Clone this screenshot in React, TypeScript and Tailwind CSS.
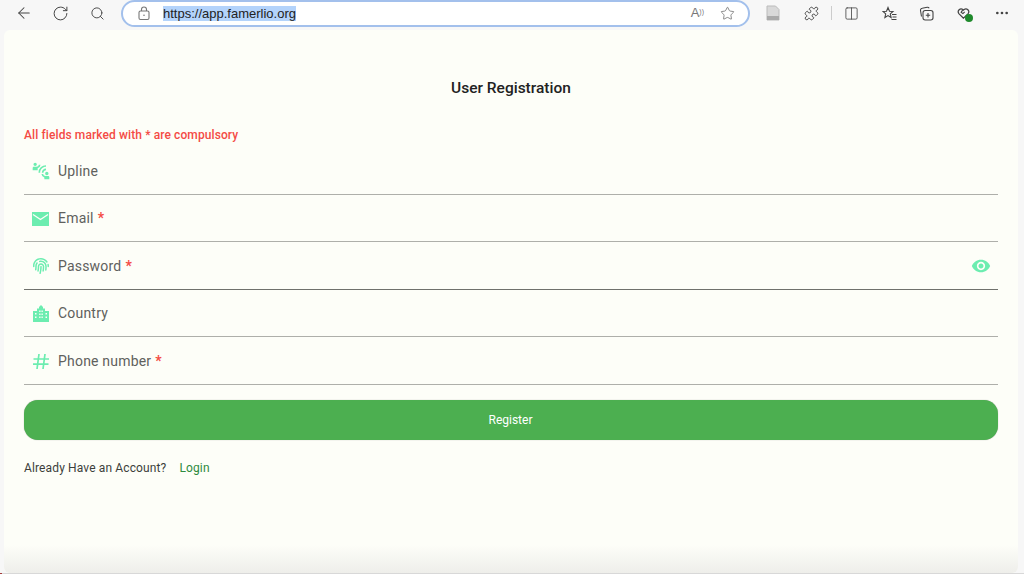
import React from "react";
import { ArrowLeft, RotateCw, Search, Star, Puzzle, Columns2, Ellipsis } from "lucide-react";
import { FaFingerprint } from "react-icons/fa";
import { MdConnectWithoutContact, MdVisibility } from "react-icons/md";

const Field = ({
  icon,
  label,
  required,
  dark,
  trailing,
}: {
  icon: React.ReactNode;
  label: string;
  required?: boolean;
  dark?: boolean;
  trailing?: React.ReactNode;
}) => (
  <div className={`flex h-[47.5px] items-center border-b pt-[2px] ${dark ? "border-[#6f716c]" : "border-[#aeafaa]"}`}>
    <div className="flex w-[34px] justify-center pr-[1px] text-[#6cedb0]">{icon}</div>
    <span className="text-[14px] tracking-[0.2px] text-[#5f615d]">{label}</span>
    {required && <span className="ml-[4px] text-[14px] font-bold text-[#f44b45]">*</span>}
    {trailing && <div className="ml-auto flex text-[#6cedb0]">{trailing}</div>}
  </div>
);

const MailIcon = () => (
  <svg width="17" height="14" viewBox="0 0 17 14">
    <rect width="17" height="14" fill="currentColor" />
    <path d="M1 2.500 8.500 7.500 16 2.500" fill="none" stroke="#fdfef8" strokeWidth="1.3" />
  </svg>
);

const CityIcon = () => (
  <svg width="16" height="17" viewBox="0 0 16 17">
    <path
      fill="currentColor"
      fillRule="evenodd"
      d="M0 6h4V3.500h2V2l2-2 2 2v1.500h2V6h4v11H0zM2 8v1.500h1.500V8zm0 3.500V13h1.500v-1.500zM6.200 5.500V7h1.300V5.500zm2.300 0V7h1.300V5.500zM6.200 8.500V10h1.300V8.500zm2.300 0V10h1.300V8.500zm-2.300 3V13h1.300v-1.500zm2.300 0V13h1.300v-1.500zM12.500 8v1.500H14V8zm0 3.500V13H14v-1.500z"
    />
  </svg>
);

const HashIcon = () => (
  <svg width="16" height="15" viewBox="0 0 16 15" fill="none" stroke="currentColor" strokeWidth="1.7">
    <path d="M6 0 4 15M12 0l-2 15M0.500 5H16M0 10.200h15.500" />
  </svg>
);

const Toolbar = () => (
  <div className="flex h-[30px] shrink-0 items-center pb-[4px] text-[#444]">
    <ArrowLeft size={18} strokeWidth={1.4} className="ml-[15px]" />
    <RotateCw size={17} strokeWidth={1.4} className="ml-[19px]" />
    <Search size={15} strokeWidth={1.5} className="ml-[21px]" />
    <div className="ml-[16px] flex h-[27px] w-[629px] items-center rounded-full border-2 border-[#a3c0ec] bg-white">
      <svg width="14" height="15" viewBox="0 0 14 15" fill="none" stroke="#777" strokeWidth="1.1" className="ml-[14px]">
        <rect x="2" y="5" width="10" height="8.500" rx="1.500" />
        <path d="M4.500 5V3.500a2.500 2.500 0 0 1 5 0V5" />
        <circle cx="7" cy="9.200" r="0.800" fill="#777" stroke="none" />
      </svg>
      <span className="ml-[12px] bg-[#b3d3fb] text-[13px] leading-[15px] text-[#222] [font-family:'Liberation_Sans',sans-serif]">
        https://app.famerlio.org
      </span>
      <span className="ml-auto text-[13px] text-[#777] [font-family:'Liberation_Sans',sans-serif]">
        A<sup className="text-[7px]">))</sup>
      </span>
      <Star size={15} strokeWidth={1.2} className="ml-[16px] mr-[13px] text-[#666]" />
    </div>
    <svg width="14" height="16" viewBox="0 0 14 16" className="ml-[16px]">
      <path d="M1 1h8.500L13 4.500V15H1z" fill="#d9d9d9" stroke="#bbb" />
      <rect x="1" y="11" width="12" height="4" fill="#aaa" />
    </svg>
    <Puzzle size={15} strokeWidth={1.6} className="ml-[24px]" />
    <div className="ml-[12px] h-[14px] w-px bg-[#ccc]" />
    <Columns2 size={15} strokeWidth={1.3} className="ml-[12px]" />
    <svg width="15" height="15" viewBox="0 0 15 15" fill="none" stroke="#444" strokeWidth="1.1" className="ml-[23px]">
      <path d="M6 1.500 7.500 5.200l3.500.3-2.700 2.400.8 3.600L6 9.600l-3.100 1.900.8-3.600L1 5.500l3.500-.3zM10 8.500h4.500M10.500 11h4M9.500 13.500h5" />
    </svg>
    <svg width="15" height="15" viewBox="0 0 15 15" fill="none" stroke="#444" strokeWidth="1.1" className="ml-[22px]">
      <path d="M2.500 10.500 1.500 4.500a2 2 0 0 1 1.700-2.300l5-.9a2 2 0 0 1 2 1" />
      <rect x="4" y="4.500" width="10" height="9.500" rx="2.200" />
      <path d="M9 7v4.500M6.800 9.200h4.400" />
    </svg>
    <div className="relative ml-[22px]">
      <svg width="15" height="14" viewBox="0 0 24 24" fill="none" stroke="#444" strokeWidth="2">
        <path d="M12 21 4 13a5 5 0 0 1 7-7l1 1 1-1a5 5 0 0 1 7 7zM11 6 8 11l3 2 3-3" />
      </svg>
      <span className="absolute -bottom-[2px] -right-[2px] h-[8px] w-[8px] rounded-full bg-[#1f8a2c]" />
    </div>
    <Ellipsis size={16} className="ml-[23px]" />
  </div>
);

export default function App() {
  return (
    <div className="flex h-[574px] w-[1024px] flex-col overflow-hidden bg-[#f7f7f7] [font-family:Roboto,sans-serif]">
      <Toolbar />
      <div className="ml-[4px] mr-[6px] flex flex-1 flex-col overflow-hidden rounded-[6px] bg-[#fdfef8] px-[20px]">
        <h1 className="mt-[47px] text-center text-[15.5px] leading-[22px] font-medium text-[#222]">
          User Registration
        </h1>
        <p className="mt-[27px] text-[12px] leading-[18px] font-medium tracking-[0.1px] text-[#f44b45]">
          All fields marked with * are compulsory
        </p>
        <div className="mt-[3px] flex flex-col">
          <Field icon={<MdConnectWithoutContact size={20} />} label="Upline" />
          <Field icon={<MailIcon />} label="Email" required />
          <Field
            icon={<FaFingerprint size={16} />}
            label="Password"
            required
            dark
            trailing={<MdVisibility size={20} className="mr-[7px]" />}
          />
          <Field icon={<CityIcon />} label="Country" />
          <Field icon={<HashIcon />} label="Phone number" required />
        </div>
        <button
          type="button"
          className="mt-[15px] h-[40px] shrink-0 rounded-[14px] bg-[#4caf50] pr-[1px] text-center text-[12px] text-white shadow-[0_0_1px_rgba(0,0,0,0.4)]"
        >
          Register
        </button>
        <div className="mt-[19px] flex text-[12px] leading-[18px] tracking-[0.13px]">
          <span className="text-[#3c3e3b]">Already Have an Account?</span>
          <span className="ml-[13px] text-[#2e8b3e]">Login</span>
        </div>
        <div className="-mx-[20px] mt-auto h-[28px] bg-gradient-to-b from-[#fdfef8] to-[#eeeeea]" />
      </div>
      <div className="flex h-[1px] shrink-0 bg-[#d8d8d8]">
        <span className="w-[2px] bg-[#a33a3a]" />
      </div>
    </div>
  );
}
